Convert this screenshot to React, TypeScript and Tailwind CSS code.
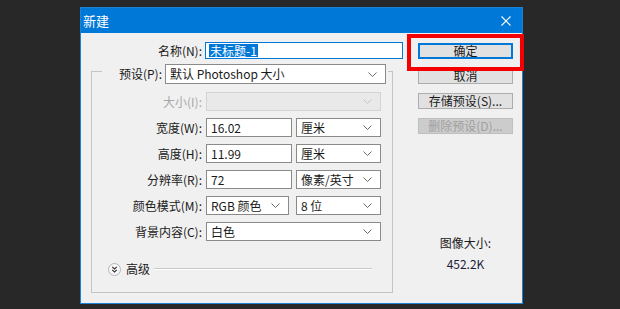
import React from "react";

// 小箭头 (下拉框)
const Chevron = ({ disabled }: { disabled?: boolean }) => (
  <svg width="9" height="5" viewBox="0 0 9 5" className="shrink-0">
    <polyline points="0.5,0.5 4.5,4.5 8.5,0.5" fill="none" stroke={disabled ? "#c4c4c4" : "#6a6a6a"} strokeWidth="1" />
  </svg>
);

const Select = ({ value, w, h = "h-[19px]", disabled }: { value?: string; w: string; h?: string; disabled?: boolean }) => (
  <div
    className={`${w} ${h} flex items-center justify-between pl-[4px] pr-[8px] border ${
      disabled ? "bg-[#e9e9e9] border-[#d4d4d4]" : "bg-white border-[#8a8a8a]"
    }`}
  >
    <span className="text-[12px] leading-[14px] text-[#1a1a1a] whitespace-nowrap">{value}</span>
    <Chevron disabled={disabled} />
  </div>
);

const Input = ({ value, w }: { value: string; w: string }) => (
  <div className={`${w} h-[19px] flex items-center pl-[4px] bg-white border border-[#8a8a8a]`}>
    <span className="text-[12px] leading-[14px] text-[#1a1a1a]">{value}</span>
  </div>
);

const Label = ({ text, w, disabled }: { text: string; w: string; disabled?: boolean }) => (
  <div className={`${w} text-right text-[12px] leading-[19px] whitespace-nowrap ${disabled ? "text-[#a8a8a8]" : "text-[#1a1a1a]"}`}>
    {text}
  </div>
);

const Button = ({ text, primary, disabled }: { text: string; primary?: boolean; disabled?: boolean }) => (
  <div
    className={`w-[95px] h-[16px] flex items-center justify-center text-[12px] leading-[14px] ${
      primary
        ? "bg-[#e1e1e1] border-2 border-[#0078d7] text-[#1a1a1a]"
        : disabled
        ? "bg-[#cccccc] border border-[#bfbfbf] text-[#a0a0a0]"
        : "bg-[#e1e1e1] border border-[#adadad] text-[#1a1a1a]"
    }`}
  >
    {text}
  </div>
);

export default function App() {
  return (
    <div className="relative w-[620px] h-[309px] overflow-hidden bg-[#282828] pt-[7px] pl-[80px] font-['Noto_Sans_CJK_SC','Microsoft_YaHei',sans-serif]">
      <div className="w-[443px] h-[297px] flex flex-col border border-[#1883d7] bg-[#f0f0f0]">
        {/* 标题栏 */}
        <div className="h-[25px] shrink-0 flex items-center justify-between bg-[#0078d7] pl-[2px] pr-[11px]">
          <span className="text-[13px] leading-[16px] text-white">新建</span>
          <svg width="10" height="10" viewBox="0 0 10 10">
            <path d="M0.5 0.5 L9.5 9.5 M9.5 0.5 L0.5 9.5" stroke="white" strokeWidth="1.1" />
          </svg>
        </div>

        <div className="flex flex-1 pt-[9px]">
          {/* 左侧表单 */}
          <div className="w-[324px] flex flex-col">
            <div className="flex items-center h-[17px]">
              <Label text="名称(N):" w="w-[121px]" />
              <div className="ml-[3px] w-[198px] h-[17px] flex items-center pl-[3px] bg-white border border-[#0078d7]">
                <span className="bg-[#0078d7] text-white text-[12px] leading-[13px] px-[1px]">未标题-1</span>
              </div>
            </div>

            <div className="ml-[10px] mt-[5px] w-[302px] flex flex-col">
              <div className="flex h-[20px]">
                <div className="w-[11px] mt-[7px] border-t border-l border-[#c4c4c4]" />
                <div className="w-[60px] text-right text-[12px] leading-[20px] text-[#1a1a1a] whitespace-nowrap">预设(P):</div>
                <div className="ml-[3px]">
                  <Select value="默认 Photoshop 大小" w="w-[221px]" h="h-[20px]" />
                </div>
                <div className="ml-[2px] flex-1 mt-[7px] border-t border-r border-[#c4c4c4]" />
              </div>

              <div className="h-[209px] flex flex-col gap-[7px] pt-[8px] border-l border-r border-b border-[#c4c4c4]">
                <div className="flex">
                  <Label text="大小(I):" w="w-[110px]" disabled />
                  <div className="ml-[4px]">
                    <Select w="w-[175px]" disabled />
                  </div>
                </div>
                <div className="flex">
                  <Label text="宽度(W):" w="w-[110px]" />
                  <div className="ml-[4px] flex gap-[4px]">
                    <Input value="16.02" w="w-[86px]" />
                    <Select value="厘米" w="w-[85px]" />
                  </div>
                </div>
                <div className="flex">
                  <Label text="高度(H):" w="w-[110px]" />
                  <div className="ml-[4px] flex gap-[4px]">
                    <Input value="11.99" w="w-[86px]" />
                    <Select value="厘米" w="w-[85px]" />
                  </div>
                </div>
                <div className="flex">
                  <Label text="分辨率(R):" w="w-[110px]" />
                  <div className="ml-[4px] flex gap-[4px]">
                    <Input value="72" w="w-[86px]" />
                    <Select value="像素/英寸" w="w-[85px]" />
                  </div>
                </div>
                <div className="flex">
                  <Label text="颜色模式(M):" w="w-[110px]" />
                  <div className="ml-[4px] flex gap-[7px]">
                    <Select value="RGB 颜色" w="w-[83px]" />
                    <Select value="8 位" w="w-[85px]" />
                  </div>
                </div>
                <div className="flex">
                  <Label text="背景内容(C):" w="w-[110px]" />
                  <div className="ml-[4px]">
                    <Select value="白色" w="w-[175px]" />
                  </div>
                </div>

                {/* 高级 */}
                <div className="mt-[14px] flex items-center h-[14px] pl-[16px]">
                  <svg width="13" height="13" viewBox="0 0 13 13">
                    <circle cx="6.5" cy="6.5" r="6" fill="#f7f7f7" stroke="#b4b4b4" />
                    <path d="M4.2 3.8 L6.5 6 L8.8 3.8 M4.2 6.8 L6.5 9 L8.8 6.8" fill="none" stroke="#333" strokeWidth="1.1" />
                  </svg>
                  <span className="ml-[5px] text-[12px] leading-[14px] text-[#1a1a1a]">高级</span>
                  <div className="ml-[4px] mr-[20px] flex-1 h-[2px] border-t border-[#c8c8c8] border-b border-b-white" />
                </div>
              </div>
            </div>
          </div>

          {/* 右侧按钮 */}
          <div className="flex-1 flex flex-col pl-[13px] pt-[1px]">
            <div className="flex flex-col gap-[9px]">
              <Button text="确定" primary />
              <Button text="取消" />
              <Button text="存储预设(S)..." />
              <Button text="删除预设(D)..." disabled />
            </div>
            <div className="w-[95px] mt-[101px] flex flex-col items-center text-[12px] leading-[16px] text-[#1a1a1a]">
              <span>图像大小:</span>
              <span className="mt-[5px] text-[#1c1c3a]">452.2K</span>
            </div>
          </div>
        </div>
      </div>

      {/* 红色标注框 */}
      <div className="absolute left-[407px] top-[34px] w-[117px] h-[37px] border-[4px] border-[#f40000]" />
    </div>
  );
}
